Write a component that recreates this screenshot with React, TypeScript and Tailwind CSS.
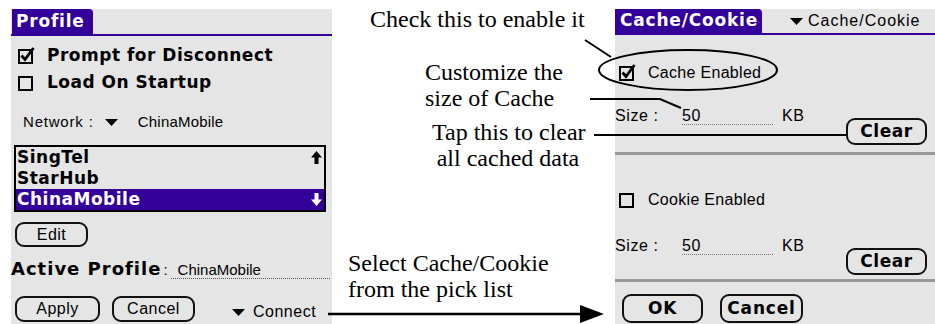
import type { ReactNode } from "react";

const palm = "font-['DejaVu_Sans',Verdana,sans-serif]";
const reg = "font-['Liberation_Sans',Arial,sans-serif]";

function CheckBox({ checked }: { checked?: boolean }) {
  return (
    <svg width="17" height="17" viewBox="0 0 17 17" className="shrink-0">
      <rect x="1" y="3" width="13" height="13" fill="none" stroke="#000" strokeWidth="2" />
      {checked && (
        <path d="M3.5 8.5 L7 12.5 L15.5 1" fill="none" stroke="#000" strokeWidth="2.8" />
      )}
    </svg>
  );
}

function Triangle() {
  return (
    <svg width="13" height="7" viewBox="0 0 13 7" className="shrink-0">
      <polygon points="0,0 13,0 6.5,7" fill="#000" />
    </svg>
  );
}

function ListArrow({ down, white }: { down?: boolean; white?: boolean }) {
  return (
    <svg width="11" height="13" viewBox="0 0 11 13" className={down ? "rotate-180" : ""}>
      <polygon points="5.5,0 11,6.5 7.5,6.5 7.5,13 3.5,13 3.5,6.5 0,6.5" fill={white ? "#fff" : "#000"} />
    </svg>
  );
}

function PalmButton({ children, className }: { children: ReactNode; className: string }) {
  return (
    <div
      className={`flex shrink-0 items-center justify-center rounded-[9px] border-2 border-[#111] ${className}`}
    >
      {children}
    </div>
  );
}

function SizeRow({ top }: { top: string }) {
  return (
    <div className={`flex h-[43px] items-start ${top}`}>
      <div className={`mt-[2px] flex h-[19px] items-center text-[16px] leading-[19px] ${reg}`}>
        <span className="w-[45px] tracking-[0.6px]">Size :</span>
        <span className="ml-[22px] w-[91px] border-b border-dotted border-[#777] leading-[17px] tracking-[0.5px]">
          50
        </span>
        <span className="ml-[9px] tracking-[0.5px]">KB</span>
      </div>
      <PalmButton className={`ml-auto mr-[8px] mt-[14px] h-[27px] w-[81px] text-[17px] font-bold tracking-[0.6px] ${palm}`}>
        Clear
      </PalmButton>
    </div>
  );
}

export default function App() {
  return (
    <div className="relative flex h-[324px] w-[935px] items-start overflow-hidden bg-white text-black">
      {/* Profile screen */}
      <div className="ml-[11px] mt-[9px] flex h-[315px] w-[321px] shrink-0 flex-col bg-[#e5e5e5] *:shrink-0">
        <div
          className={`ml-[1px] flex h-[25px] w-[81px] items-center rounded-tr-[4px] bg-[#330099] pl-[4px] text-[17px] font-bold tracking-[0.8px] text-white ${palm}`}
        >
          Profile
        </div>
        <div className="h-[2px] bg-[#330099]" />

        <div className={`mt-[9px] flex h-[20px] items-center gap-[12px] pl-[7px] text-[17px] font-bold leading-[20px] tracking-[0.5px] ${palm}`}>
          <CheckBox checked />
          <span>Prompt for Disconnect</span>
        </div>
        <div className={`mt-[7px] flex h-[20px] items-center gap-[12px] pl-[7px] text-[17px] font-bold leading-[20px] tracking-[0.5px] ${palm}`}>
          <CheckBox />
          <span>Load On Startup</span>
        </div>

        <div className={`mt-[21px] flex h-[18px] items-center pl-[12px] text-[15px] leading-[18px] ${reg}`}>
          <span className="tracking-[0.8px]">Network</span>
          <span className="ml-[5px]">:</span>
          <span className="ml-[12px]">
            <Triangle />
          </span>
          <span className="ml-[20px] tracking-[0.2px]">ChinaMobile</span>
        </div>

        <div className={`ml-[3px] mt-[14px] w-[312px] border-2 border-black text-[17px] font-bold leading-[21px] tracking-[0.5px] ${palm}`}>
          <div className="flex h-[21px] items-center justify-between pl-[1px] pr-[2px]">
            <span>SingTel</span>
            <ListArrow />
          </div>
          <div className="flex h-[21px] items-center pl-[1px]">StarHub</div>
          <div className="flex h-[21px] items-center justify-between bg-[#330099] pl-[1px] pr-[2px] text-white">
            <span>ChinaMobile</span>
            <ListArrow down white />
          </div>
        </div>

        <PalmButton className={`ml-[4px] mt-[10px] h-[25px] w-[73px] text-[16px] tracking-[0.5px] ${reg}`}>
          Edit
        </PalmButton>

        <div className="mt-[12px] flex h-[20px] items-end pr-[2px]">
          <span className={`text-[18px] font-bold leading-[20px] tracking-[1px] ${palm}`}>Active Profile</span>
          <span className={`ml-[2px] text-[15px] leading-[18px] ${reg}`}>:</span>
          <span className={`ml-[3px] flex-1 border-b border-dotted border-[#555] pl-[7px] text-[15px] leading-[17px] ${reg}`}>
            ChinaMobile
          </span>
        </div>

        <div className={`mt-[17px] flex h-[26px] items-start text-[16px] leading-[20px] tracking-[0.5px] ${reg}`}>
          <PalmButton className="ml-[4px] h-[26px] w-[85px]">Apply</PalmButton>
          <PalmButton className="ml-[12px] h-[26px] w-[83px]">Cancel</PalmButton>
          <span className="ml-[37px] mt-[6px] flex items-center gap-[8px]">
            <Triangle />
            <span>Connect</span>
          </span>
        </div>
      </div>

      {/* annotations */}
      <div className="flex h-full w-[283px] shrink-0 flex-col whitespace-nowrap font-['Liberation_Serif','Times_New_Roman',serif] text-[24px] leading-[26px]">
        <p className="ml-[38px] mt-[6px]">Check this to enable it</p>
        <p className="ml-[93px] mt-[27px]">
          Customize the
          <br />
          size of Cache
        </p>
        <p className="ml-[100px] mt-[8px] w-[152px] text-center">
          Tap this to clear
          <br />
          all cached data
        </p>
        <p className="ml-[16px] mt-[79px]">
          Select Cache/Cookie
          <br />
          from the pick list
        </p>
      </div>

      {/* Cache/Cookie screen */}
      <div className="mt-[9px] flex h-[315px] w-[320px] shrink-0 flex-col bg-[#e5e5e5] *:shrink-0">
        <div className="flex h-[24px] items-center">
          <div
            className={`flex h-[24px] w-[147px] items-center rounded-tr-[4px] bg-[#330099] pl-[5px] text-[17px] font-bold tracking-[0.8px] text-white ${palm}`}
          >
            Cache/Cookie
          </div>
          <span className={`ml-[28px] flex items-center gap-[5px] text-[16px] tracking-[1px] ${reg}`}>
            <Triangle />
            <span>Cache/Cookie</span>
          </span>
        </div>
        <div className="h-[2px] bg-[#330099]" />

        <div className={`mt-[28px] flex h-[19px] items-center gap-[12px] pl-[4px] text-[16px] leading-[19px] tracking-[0.3px] ${reg}`}>
          <CheckBox checked />
          <span>Cache Enabled</span>
        </div>

        <SizeRow top="mt-[22px]" />
        <div className="mt-[5px] h-[3px] bg-[#999]" />

        <div className={`mt-[35px] flex h-[19px] items-center gap-[12px] pl-[4px] text-[16px] leading-[19px] tracking-[0.3px] ${reg}`}>
          <CheckBox />
          <span>Cookie Enabled</span>
        </div>

        <SizeRow top="mt-[25px]" />
        <div className="mt-[2px] h-[3px] bg-[#999]" />

        <div className={`mt-[12px] flex items-center text-[17px] font-bold tracking-[0.8px] ${palm}`}>
          <PalmButton className="ml-[7px] h-[29px] w-[81px]">OK</PalmButton>
          <PalmButton className="ml-[17px] h-[29px] w-[83px]">Cancel</PalmButton>
        </div>
      </div>

      {/* callout lines */}
      <svg className="pointer-events-none absolute inset-0" width="935" height="324" viewBox="0 0 935 324">
        <g fill="none" stroke="#000" strokeWidth="2">
          <line x1="585" y1="40" x2="611" y2="57" />
          <ellipse cx="688" cy="70" rx="89" ry="20" />
          <polyline points="590,99 660,99 681,108" />
          <line x1="594" y1="135" x2="846" y2="135" />
          <line x1="328" y1="314" x2="585" y2="314" strokeWidth="2.5" />
        </g>
        <polygon points="580,305 604,314 580,323" fill="#000" />
      </svg>
    </div>
  );
}
